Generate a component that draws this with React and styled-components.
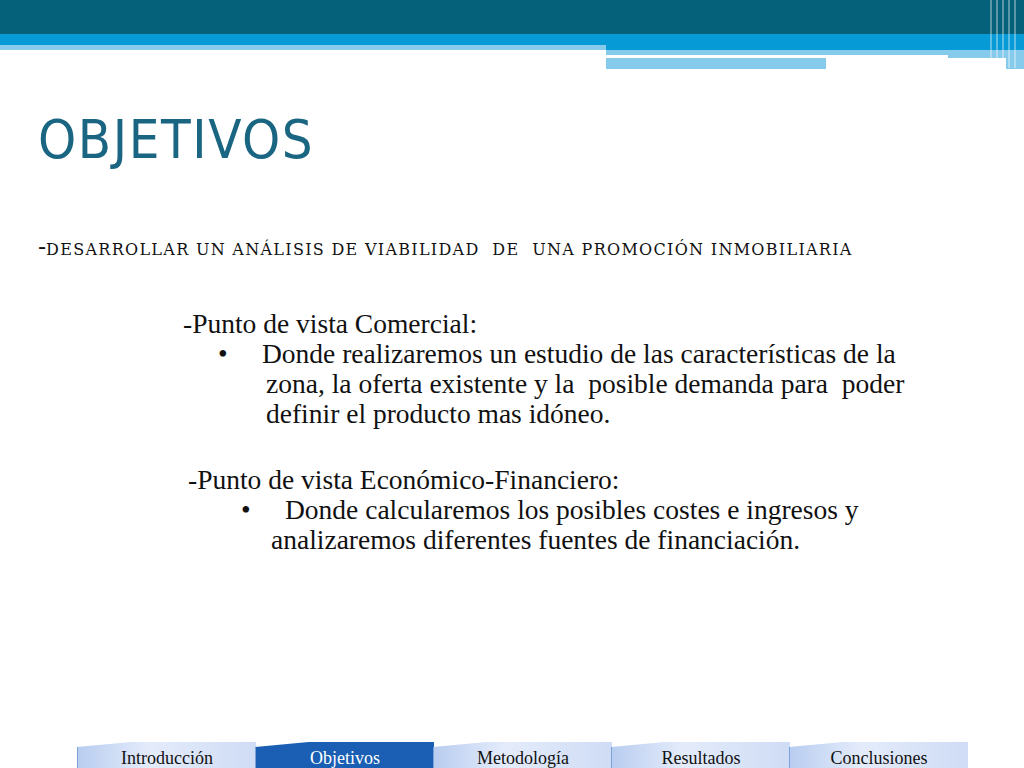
import React from "react";
import styled, { createGlobalStyle } from "styled-components";

const Global = createGlobalStyle`
  html, body { margin: 0; padding: 0; background: #fff; }
  #root { width: 1024px; height: 768px; overflow: hidden; }
`;

const Slide = styled.div`
  position: relative;
  width: 1024px;
  height: 768px;
  background: #fff;
  display: flex;
  flex-direction: column;
`;

const Header = styled.div`
  height: 70px;
  display: flex;
  flex-direction: column;
  position: relative;
`;
const Teal = styled.div`
  height: 34px;
  background: #05607a;
`;
const BandRow = styled.div`
  display: flex;
  height: ${(p) => p.h}px;
`;
const Band = styled.div`
  width: ${(p) => p.w}px;
  background: ${(p) => p.c};
`;
const Stripes = styled.div`
  position: absolute;
  right: 4px;
  top: 0;
  width: 30px;
  height: 68px;
  background: repeating-linear-gradient(90deg, rgba(255,255,255,0.35) 0 2px, transparent 2px 6px);
`;

const Body = styled.div`
  padding: 0 0 0 38px;
  flex: 1;
`;
const Title = styled.h1`
  margin: 38px 0 0;
  font-family: "DejaVu Sans Condensed", "DejaVu Sans", sans-serif;
  font-weight: normal;
  font-size: 54px;
  letter-spacing: 1.6px;
  color: #1a6682;
  line-height: 64px;
`;
const Sub = styled.div`
  margin-top: 61px;
  font-family: "DejaVu Serif", serif;
  font-size: 16px;
  letter-spacing: 1.3px;
  color: #111;
  white-space: nowrap;
  span { font-size: 24px; letter-spacing: 0; }
`;
const Block = styled.div`
  margin: ${(p) => p.top}px 0 0 ${(p) => p.left}px;
  font-family: "Liberation Serif", serif;
  font-size: 27.5px;
  line-height: 30px;
  color: #111;
`;
const Item = styled.div`
  margin-left: ${(p) => p.indent}px;
  text-indent: ${(p) => p.hang}px;
  width: ${(p) => p.w}px;
`;

const Tabs = styled.div`
  display: flex;
  padding-left: 77px;
  height: 26px;
`;
const Tab = styled.div`
  width: 178px;
  margin-right: -1px;
  display: flex;
  align-items: flex-end;
  justify-content: center;
  font-family: "Liberation Serif", serif;
  font-size: 18px;
  line-height: 20px;
  color: ${(p) => (p.active ? "#fff" : "#111")};
  background: ${(p) =>
    p.active ? "#1a5fb4" : "linear-gradient(90deg, #b9cdf0, #e4ecfb 40%, #cfdcf5)"};
  clip-path: polygon(0 5px, 30% 0, 100% 0, 100% 100%, 0 100%);
  border-left: 1px solid #7ea0d8;
`;

const names = ["Introducción", "Objetivos", "Metodología", "Resultados", "Conclusiones"];

export default function App() {
  return (
    <Slide>
      <Global />
      <Header>
        <Teal />
        <BandRow h={11}>
          <Band w={606} c="#069ad6" />
          <Band w={418} c="#069ad6" />
        </BandRow>
        <BandRow h={5}>
          <Band w={606} c="#86cbeb" />
          <Band w={418} c="#069ad6" />
        </BandRow>
        <BandRow h={5}>
          <Band w={606} c="#fff" />
          <Band w={418} c="#86cbeb" />
        </BandRow>
        <BandRow h={3}>
          <Band w={606} c="#fff" />
          <Band w={342} c="#fff" />
          <Band w={76} c="#86cbeb" />
        </BandRow>
        <BandRow h={11}>
          <Band w={606} c="#fff" />
          <Band w={220} c="#86cbeb" />
          <Band w={180} c="#fff" />
          <Band w={18} c="#86cbeb" />
        </BandRow>
        <Stripes />
      </Header>
      <Body>
        <Title>OBJETIVOS</Title>
        <Sub>
          <span>-</span>DESARROLLAR UN ANÁLISIS DE VIABILIDAD&nbsp; DE&nbsp; UNA PROMOCIÓN INMOBILIARIA
        </Sub>
        <Block top={48} left={145}>
          -Punto de vista Comercial:
          <Item indent={83} hang={-48} w={680}>
            •&nbsp;&nbsp;&nbsp;&nbsp;&nbsp;Donde realizaremos un estudio de las características de la
            zona, la oferta existente y la&nbsp; posible demanda para&nbsp; poder definir el producto mas idóneo.
          </Item>
        </Block>
        <Block top={36} left={150}>
          -Punto de vista Económico-Financiero:
          <Item indent={83} hang={-30} w={610}>
            •&nbsp;&nbsp;&nbsp;&nbsp;&nbsp;Donde calcularemos los posibles costes e ingresos y
            analizaremos diferentes fuentes de financiación.
          </Item>
        </Block>
      </Body>
      <Tabs>
        {names.map((n) => (
          <Tab key={n} active={n === "Objetivos"}>{n}</Tab>
        ))}
      </Tabs>
    </Slide>
  );
}
